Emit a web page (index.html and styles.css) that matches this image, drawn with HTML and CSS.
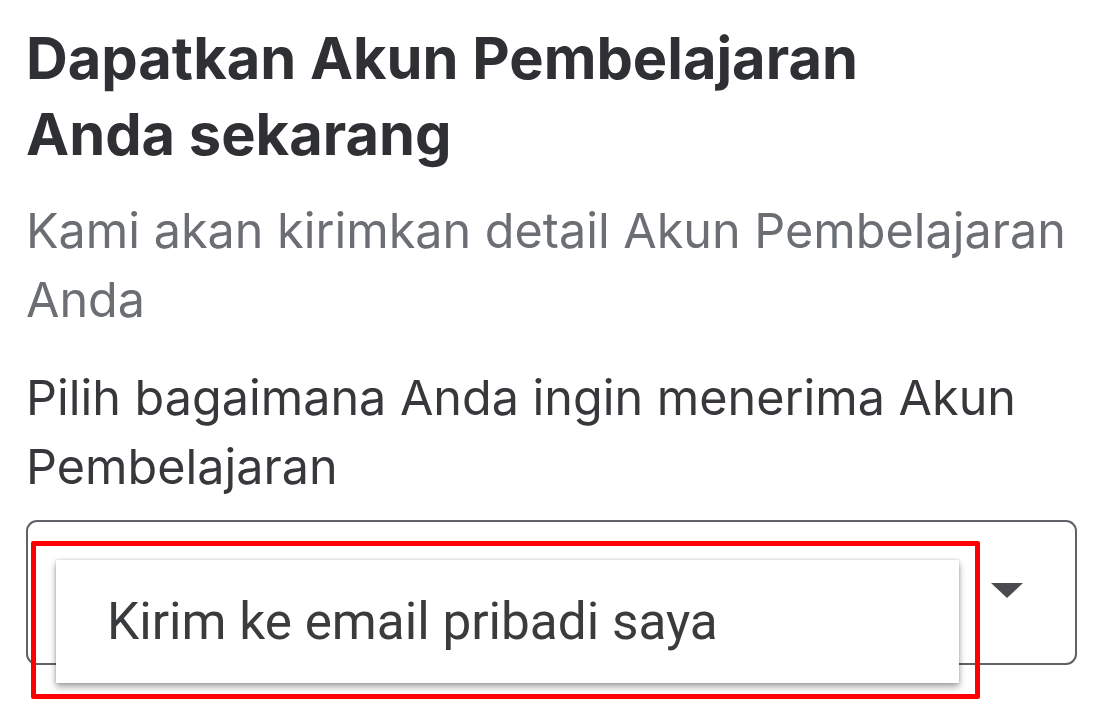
FILE: index.html
```html
<!DOCTYPE html>
<html lang="id">
<head>
    <meta charset="UTF-8">
    <meta name="viewport" content="width=device-width, initial-scale=1.0">
    <title>Akun Pembelajaran</title>
    <link rel="stylesheet" href="styles.css">
</head>
<body>
    <div class="container">
        <h1 class="title">Dapatkan Akun Pembelajaran Anda sekarang</h1>
        <p class="subtitle">Kami akan kirimkan detail Akun Pembelajaran Anda</p>
        <p class="label">Pilih bagaimana Anda ingin menerima Akun Pembelajaran</p>
        <div class="field">
            <div class="select">
                <span class="caret"></span>
            </div>
            <div class="menu">
                <div class="menu-item">Kirim ke email pribadi saya</div>
            </div>
            <div class="highlight"></div>
        </div>
    </div>
</body>
</html>
```

FILE: styles.css
```css
body {
    margin: 0;
    min-height: 711px;
    background: #fff;
    font-family: 'Inter', 'Noto Sans', sans-serif;
}
.container {
    width: 1051px;
    padding: 20px 0 60px 26px;
}
.title {
    margin: 0;
    max-width: 940px;
    font-size: 57.8px;
    line-height: 76px;
    font-weight: 700;
    color: #2f3033;
}
.subtitle {
    margin: 24px 0 0;
    font-size: 48.5px;
    line-height: 69px;
    color: #6b6f74;
}
.label {
    margin: 29px 0 0;
    font-size: 48.5px;
    line-height: 69px;
    color: #37383b;
}
.field {
    position: relative;
    margin-top: 19px;
}
.select {
    height: 141px;
    border: 2.5px solid #5f6368;
    border-radius: 11px;
    display: flex;
    align-items: center;
    justify-content: flex-end;
    padding-right: 52px;
}
.caret {
    width: 0;
    height: 0;
    border-left: 16px solid transparent;
    border-right: 16px solid transparent;
    border-top: 15px solid #4a4b50;
    margin-top: -4px;
}
.menu {
    position: absolute;
    left: 30px;
    top: 40px;
    width: 903px;
    height: 123px;
    background: #fff;
    box-shadow: 0 4px 7px rgba(0, 0, 0, 0.35), 0 0 3px rgba(0, 0, 0, 0.18);
}
.menu-item {
    padding-left: 51px;
    font-family: 'Roboto', sans-serif;
    font-size: 51.3px;
    line-height: 123px;
    color: #3a3b3d;
}
.highlight {
    position: absolute;
    left: 5px;
    top: 21px;
    width: 939px;
    height: 148px;
    border: 5px solid #ff0000;
    border-radius: 2px;
}
```
